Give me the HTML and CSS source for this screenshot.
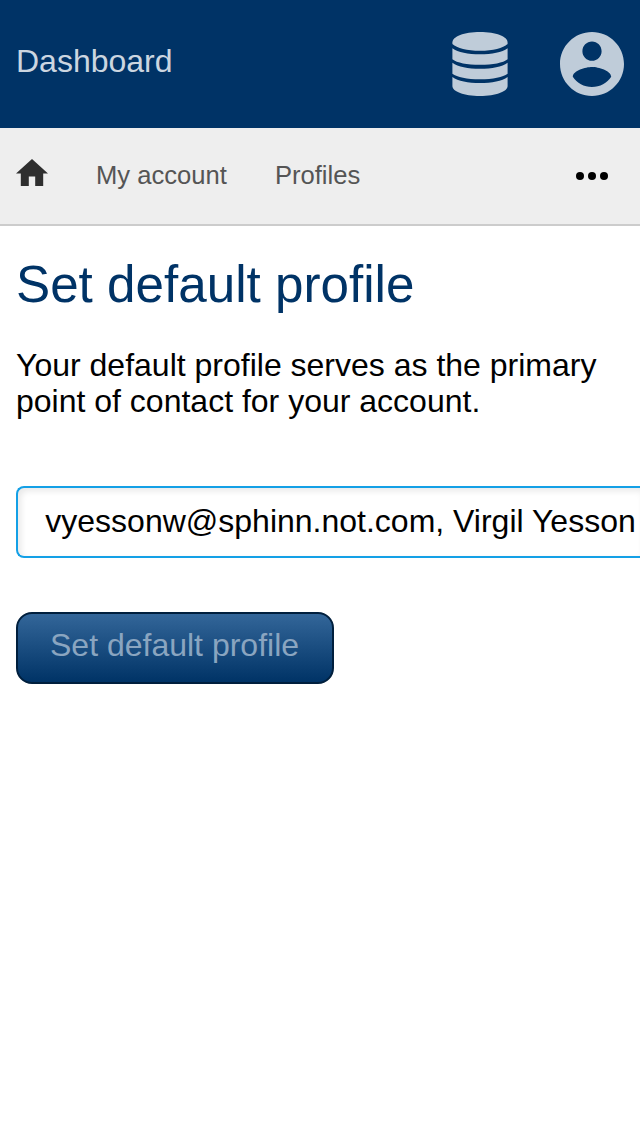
FILE: index.html
```html
<!DOCTYPE html>
<html lang="en">
<head>
<meta charset="utf-8">
<title>Set default profile</title>
<link rel="stylesheet" href="styles.css">
</head>
<body>
<header class="topbar">
  <a class="brand">Dashboard</a>
  <div class="actions">
    <svg class="db-icon" viewBox="0 0 56 64" aria-hidden="true">
      <path d="M.4 10.500C.4 4.500 12 0 28 0s27.600 4.500 27.600 10.500v1.500C51 16.200 41 18.800 28 18.800S5 16.200.4 12z"/>
      <path d="M.4 16.200C6 20.400 16 22.300 28 22.300s22-1.900 27.600-6.100V27.200C51 30.800 41 32.800 28 32.800S5 30.800 .4 27.200z"/>
      <path d="M.4 30.700C6 34.900 16 36.700 28 36.700s22-1.800 27.600-6V41.700C51 45.200 41 47.300 28 47.300S5 45.200.4 41.700z"/>
      <path d="M.4 45C6 49.200 16 51.100 28 51.100s22-1.900 27.600-6.100V54C55.600 59.500 44 64 28 64S.4 59.500.4 54z"/>
    </svg>
    <svg class="user-icon" viewBox="2 2 20 20" aria-hidden="true">
      <path d="M12 2C6.480 2 2 6.480 2 12s4.480 10 10 10 10-4.480 10-10S17.520 2 12 2zm0 3c1.660 0 3 1.340 3 3s-1.340 3-3 3-3-1.340-3-3 1.340-3 3-3zm0 14.200c-2.500 0-4.710-1.280-6-3.220.030-1.990 4-3.080 6-3.080 1.990 0 5.970 1.090 6 3.080-1.290 1.940-3.500 3.220-6 3.220z"/>
    </svg>
  </div>
</header>
<nav class="crumbs">
  <svg class="home-icon" viewBox="2 3 20 17" aria-hidden="true"><path d="M10 20v-6h4v6h5v-8h3L12 3 2 12h3v8z"/></svg>
  <a class="crumb">My account</a>
  <a class="crumb">Profiles</a>
  <svg class="more-icon" viewBox="0 0 32 8" aria-hidden="true"><circle cx="4" cy="4" r="4"/><circle cx="16" cy="4" r="4"/><circle cx="28" cy="4" r="4"/></svg>
</nav>
<main class="content">
  <h1 class="title">Set default profile</h1>
  <p class="intro">Your default profile serves as the primary point of contact for your account.</p>
  <div class="select">vyessonw@sphinn.not.com, Virgil Yesson</div>
  <button class="submit" type="button">Set default profile</button>
</main>
</body>
</html>
```
FILE: styles.css
```css
* { box-sizing: border-box; }
body {
  margin: 0;
  min-height: 1136px;
  background: #fff;
  color: #000;
  font-family: "Liberation Sans", Arial, sans-serif;
  font-size: 32px;
}
.topbar {
  display: flex;
  justify-content: space-between;
  align-items: center;
  height: 128px;
  padding: 0 16px;
  background: #036;
}
.brand { color: #ccd6e0; line-height: 36px; margin-bottom: 6px; }
.actions { display: flex; gap: 52px; fill: #bfccd9; }
.db-icon { width: 56px; height: 64px; }
.user-icon { width: 64px; height: 64px; }
.crumbs {
  display: flex;
  align-items: center;
  gap: 48px;
  height: 98px;
  padding: 0 32px 0 16px;
  background: #eee;
  border-bottom: 2px solid #ccc;
  color: #555;
  font-size: 25.6px;
}
.home-icon { width: 32px; height: 27.2px; margin-bottom: 7px; fill: #2e2e2e; }
.crumb { line-height: 30px; margin-bottom: 2px; }
.more-icon { width: 32px; height: 8px; margin-left: auto; }
.content { padding: 30px 16px 0; }
.title {
  margin: 0 0 33px;
  color: #036;
  font-size: 51.2px;
  font-weight: 400;
  line-height: 58px;
}
.intro { margin: 0; line-height: 36px; }
.select {
  height: 72px;
  margin: 67px -16px 0 0;
  padding-left: 27.3px;
  border: 2px solid #14a0e6;
  border-right: 0;
  border-radius: 8px 0 0 8px;
  box-shadow: inset 3px 3px 6px rgba(0, 0, 0, .09);
  line-height: 66px;
  white-space: nowrap;
}
.submit {
  display: block;
  width: 318px;
  height: 72px;
  margin-top: 54px;
  padding: 0 32px 6px;
  border: 2px solid #001f3d;
  border-radius: 16px;
  background: linear-gradient(#369, #036);
  color: #8aa5c0;
  font: inherit;
  text-align: left;
}
```
